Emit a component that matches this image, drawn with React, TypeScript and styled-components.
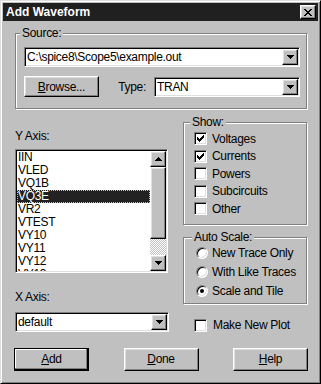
import React from "react";
import styled, { createGlobalStyle, css } from "styled-components";

const GlobalStyle = createGlobalStyle`
  html, body {
    margin: 0;
    padding: 0;
    background: #c0c0c0;
  }
  body {
    font-family: "Liberation Sans", Arial, sans-serif;
    font-size: 12px;
    letter-spacing: -0.3px;
    color: #000;
  }
  * {
    box-sizing: border-box;
  }
`;

const raised = css`
  border: 1px solid;
  border-color: #fff #000 #000 #fff;
  box-shadow: inset -1px -1px #808080, inset 1px 1px #dfdfdf;
  background: #c0c0c0;
`;

const sunken = css`
  border: 1px solid;
  border-color: #808080 #fff #fff #808080;
  box-shadow: inset 1px 1px #000, inset -1px -1px #dfdfdf;
`;

const Window = styled.div`
  width: 321px;
  height: 384px;
  border: 1px solid;
  border-color: #dfdfdf #000 #000 #dfdfdf;
  box-shadow: inset 1px 1px #fff, inset -1px -1px #808080;
  padding: 2px;
  display: flex;
  flex-direction: column;
  background: #c0c0c0;
`;

const TitleBar = styled.div`
  height: 18px;
  flex: none;
  background: #202020;
  color: #fff;
  display: flex;
  align-items: center;
  padding: 0 2px 0 3px;
  font-weight: bold;
  font-size: 12px;
  letter-spacing: 0;
`;

const CloseButton = styled.div`
  margin-left: auto;
  width: 16px;
  height: 14px;
  ${raised}
  display: flex;
  align-items: center;
  justify-content: center;
`;

const Body = styled.div`
  padding: 0 11px 0 12px;
  display: flex;
  flex-direction: column;
`;

const Group = styled.fieldset<{ $pad: string; $top: number }>`
  margin: ${(p) => p.$top}px 0 0 0;
  min-width: 0;
  border: 1px solid #808080;
  box-shadow: inset 1px 1px #fff, 1px 1px #fff;
  padding: ${(p) => p.$pad};
`;

const Legend = styled.legend`
  padding: 0 2px;
  margin-left: -4px;
  line-height: 13px;
  background: #c0c0c0;
`;

const Combo = styled.div<{ $width?: number }>`
  ${sunken}
  width: ${(p) => (p.$width ? `${p.$width}px` : "auto")};
  height: 20px;
  padding: 1px;
  background: #fff;
  display: flex;
`;

const ComboText = styled.span`
  flex: 1;
  padding-left: 1px;
  line-height: 16px;
  white-space: nowrap;
  overflow: hidden;
`;

const DropButton = styled.span`
  width: 16px;
  flex: none;
  ${raised}
  display: flex;
  align-items: center;
  justify-content: center;
`;

const Row = styled.div`
  display: flex;
  align-items: center;
  margin-top: 9px;
`;

const Button = styled.div<{ $h: number; $default?: boolean }>`
  width: 75px;
  height: ${(p) => p.$h}px;
  ${raised}
  display: flex;
  align-items: center;
  justify-content: center;
  ${(p) =>
    p.$default &&
    css`
      border-color: #000;
      box-shadow: inset -1px -1px #000, inset -2px -2px #808080, inset 1px 1px #fff;
    `}
`;

const TypeLabel = styled.span`
  margin-left: auto;
  margin-right: 8px;
`;

const Middle = styled.div`
  display: flex;
  gap: 14px;
  margin-top: 7px;
`;

const LeftColumn = styled.div`
  width: 154px;
  padding-top: 13px;
  display: flex;
  flex-direction: column;
`;

const RightColumn = styled.div`
  width: 124px;
  display: flex;
  flex-direction: column;
`;

const Label = styled.div<{ $gap: number }>`
  line-height: 15px;
  margin-bottom: ${(p) => p.$gap}px;
`;

const ListBox = styled.div`
  ${sunken}
  width: 153px;
  height: 124px;
  padding: 1px;
  background: #fff;
  display: flex;
  margin-bottom: 17px;
`;

const ListItems = styled.div`
  flex: 1;
  overflow: hidden;
`;

const ListItem = styled.div<{ $selected?: boolean }>`
  height: 13px;
  line-height: 13px;
  padding-left: 1px;
  white-space: nowrap;
  ${(p) =>
    p.$selected &&
    css`
      background: #222;
      color: #fff;
      outline: 1px dotted #c0c0c0;
      outline-offset: -1px;
    `}
`;

const ScrollBar = styled.div`
  width: 16px;
  display: flex;
  flex-direction: column;
`;

const ScrollButton = styled.div`
  height: 16px;
  ${raised}
  display: flex;
  align-items: center;
  justify-content: center;
`;

const Thumb = styled.div`
  height: 72px;
  ${raised}
`;

const Track = styled.div`
  flex: 1;
  background: repeating-conic-gradient(#fff 0 25%, #c0c0c0 0 50%) 0 0 / 2px 2px;
`;

const OptionRow = styled.div<{ $h: number; $gap: number }>`
  display: flex;
  align-items: center;
  height: ${(p) => p.$h}px;
  gap: ${(p) => p.$gap}px;
  white-space: nowrap;
`;

const CheckBox = styled.span`
  width: 13px;
  height: 13px;
  flex: none;
  ${sunken}
  background: #fff;
  display: flex;
  align-items: center;
  justify-content: center;
`;

const Radio = styled.span<{ $on?: boolean }>`
  width: 12px;
  height: 12px;
  flex: none;
  border-radius: 50%;
  background: #fff;
  border: 1px solid;
  border-color: #808080 #fff #fff #808080;
  box-shadow: inset 1px 1px #000, inset -1px -1px #dfdfdf;
  display: flex;
  align-items: center;
  justify-content: center;
  &::after {
    content: "";
    width: 4px;
    height: 4px;
    border-radius: 50%;
    background: #000;
    display: ${(p) => (p.$on ? "block" : "none")};
  }
`;

const NewPlot = styled(OptionRow)`
  margin: 13px 0 0 11px;
`;

const Buttons = styled.div`
  display: flex;
  justify-content: space-between;
  margin: 14px -1px 0;
`;

const Arrow = ({ up }: { up?: boolean }) => (
  <svg width="7" height="4" shapeRendering="crispEdges" style={up ? { transform: "scaleY(-1)" } : undefined}>
    <path d="M0 0h7v1H0z M1 1h5v1H1z M2 2h3v1H2z M3 3h1v1H3z" fill="#000" />
  </svg>
);

const CheckMark = () => (
  <svg width="7" height="7" shapeRendering="crispEdges">
    <path
      d="M0 2h1v3H0z M1 3h1v3H1z M2 4h1v3H2z M3 3h1v3H3z M4 2h1v3H4z M5 1h1v3H5z M6 0h1v3H6z"
      fill="#000"
    />
  </svg>
);

const CloseGlyph = () => (
  <svg width="8" height="7" shapeRendering="crispEdges">
    <path
      d="M0 0h2v1H0z M6 0h2v1H6z M1 1h2v1H1z M5 1h2v1H5z M2 2h4v1H2z M3 3h2v1H3z M2 4h4v1H2z M1 5h2v1H1z M5 5h2v1H5z M0 6h2v1H0z M6 6h2v1H6z"
      fill="#000"
    />
  </svg>
);

const signals = ["IIN", "VLED", "VQ1B", "VQ3E", "VR2", "VTEST", "VY10", "VY11", "VY12", "VY13"];

const shows = [
  { label: "Voltages", on: true },
  { label: "Currents", on: true },
  { label: "Powers", on: false },
  { label: "Subcircuits", on: false },
  { label: "Other", on: false },
];

const scales = [
  { label: "New Trace Only", on: false },
  { label: "With Like Traces", on: false },
  { label: "Scale and Tile", on: true },
];

const App = () => (
  <>
    <GlobalStyle />
    <Window>
      <TitleBar>
        Add Waveform
        <CloseButton>
          <CloseGlyph />
        </CloseButton>
      </TitleBar>
      <Body>
        <Group $top={6} $pad="7px 6px 11px 8px">
          <Legend>Source:</Legend>
          <Combo>
            <ComboText>C:\spice8\Scope5\example.out</ComboText>
            <DropButton>
              <Arrow />
            </DropButton>
          </Combo>
          <Row>
            <Button $h={21}>
              <u>B</u>rowse...
            </Button>
            <TypeLabel>Type:</TypeLabel>
            <Combo $width={146}>
              <ComboText>TRAN</ComboText>
              <DropButton>
                <Arrow />
              </DropButton>
            </Combo>
          </Row>
        </Group>

        <Middle>
          <LeftColumn>
            <Label $gap={5}>Y Axis:</Label>
            <ListBox>
              <ListItems>
                {signals.map((s) => (
                  <ListItem key={s} $selected={s === "VQ3E"}>
                    {s}
                  </ListItem>
                ))}
              </ListItems>
              <ScrollBar>
                <ScrollButton>
                  <Arrow up />
                </ScrollButton>
                <Thumb />
                <Track />
                <ScrollButton>
                  <Arrow />
                </ScrollButton>
              </ScrollBar>
            </ListBox>
            <Label $gap={7}>X Axis:</Label>
            <Combo>
              <ComboText>default</ComboText>
              <DropButton>
                <Arrow />
              </DropButton>
            </Combo>
          </LeftColumn>

          <RightColumn>
            <Group $top={0} $pad="1px 6px 6px 10px">
              <Legend>Show:</Legend>
              {shows.map((s) => (
                <OptionRow key={s.label} $h={17.5} $gap={5}>
                  <CheckBox>{s.on && <CheckMark />}</CheckBox>
                  {s.label}
                </OptionRow>
              ))}
            </Group>
            <Group $top={6} $pad="0 4px 2px 12px">
              <Legend>Auto Scale:</Legend>
              {scales.map((s) => (
                <OptionRow key={s.label} $h={19} $gap={4}>
                  <Radio $on={s.on} />
                  {s.label}
                </OptionRow>
              ))}
            </Group>
            <NewPlot $h={17} $gap={6}>
              <CheckBox />
              Make New Plot
            </NewPlot>
          </RightColumn>
        </Middle>

        <Buttons>
          <Button $h={23} $default>
            <u>A</u>dd
          </Button>
          <Button $h={23}>
            <u>D</u>one
          </Button>
          <Button $h={23}>
            <u>H</u>elp
          </Button>
        </Buttons>
      </Body>
    </Window>
  </>
);

export default App;
